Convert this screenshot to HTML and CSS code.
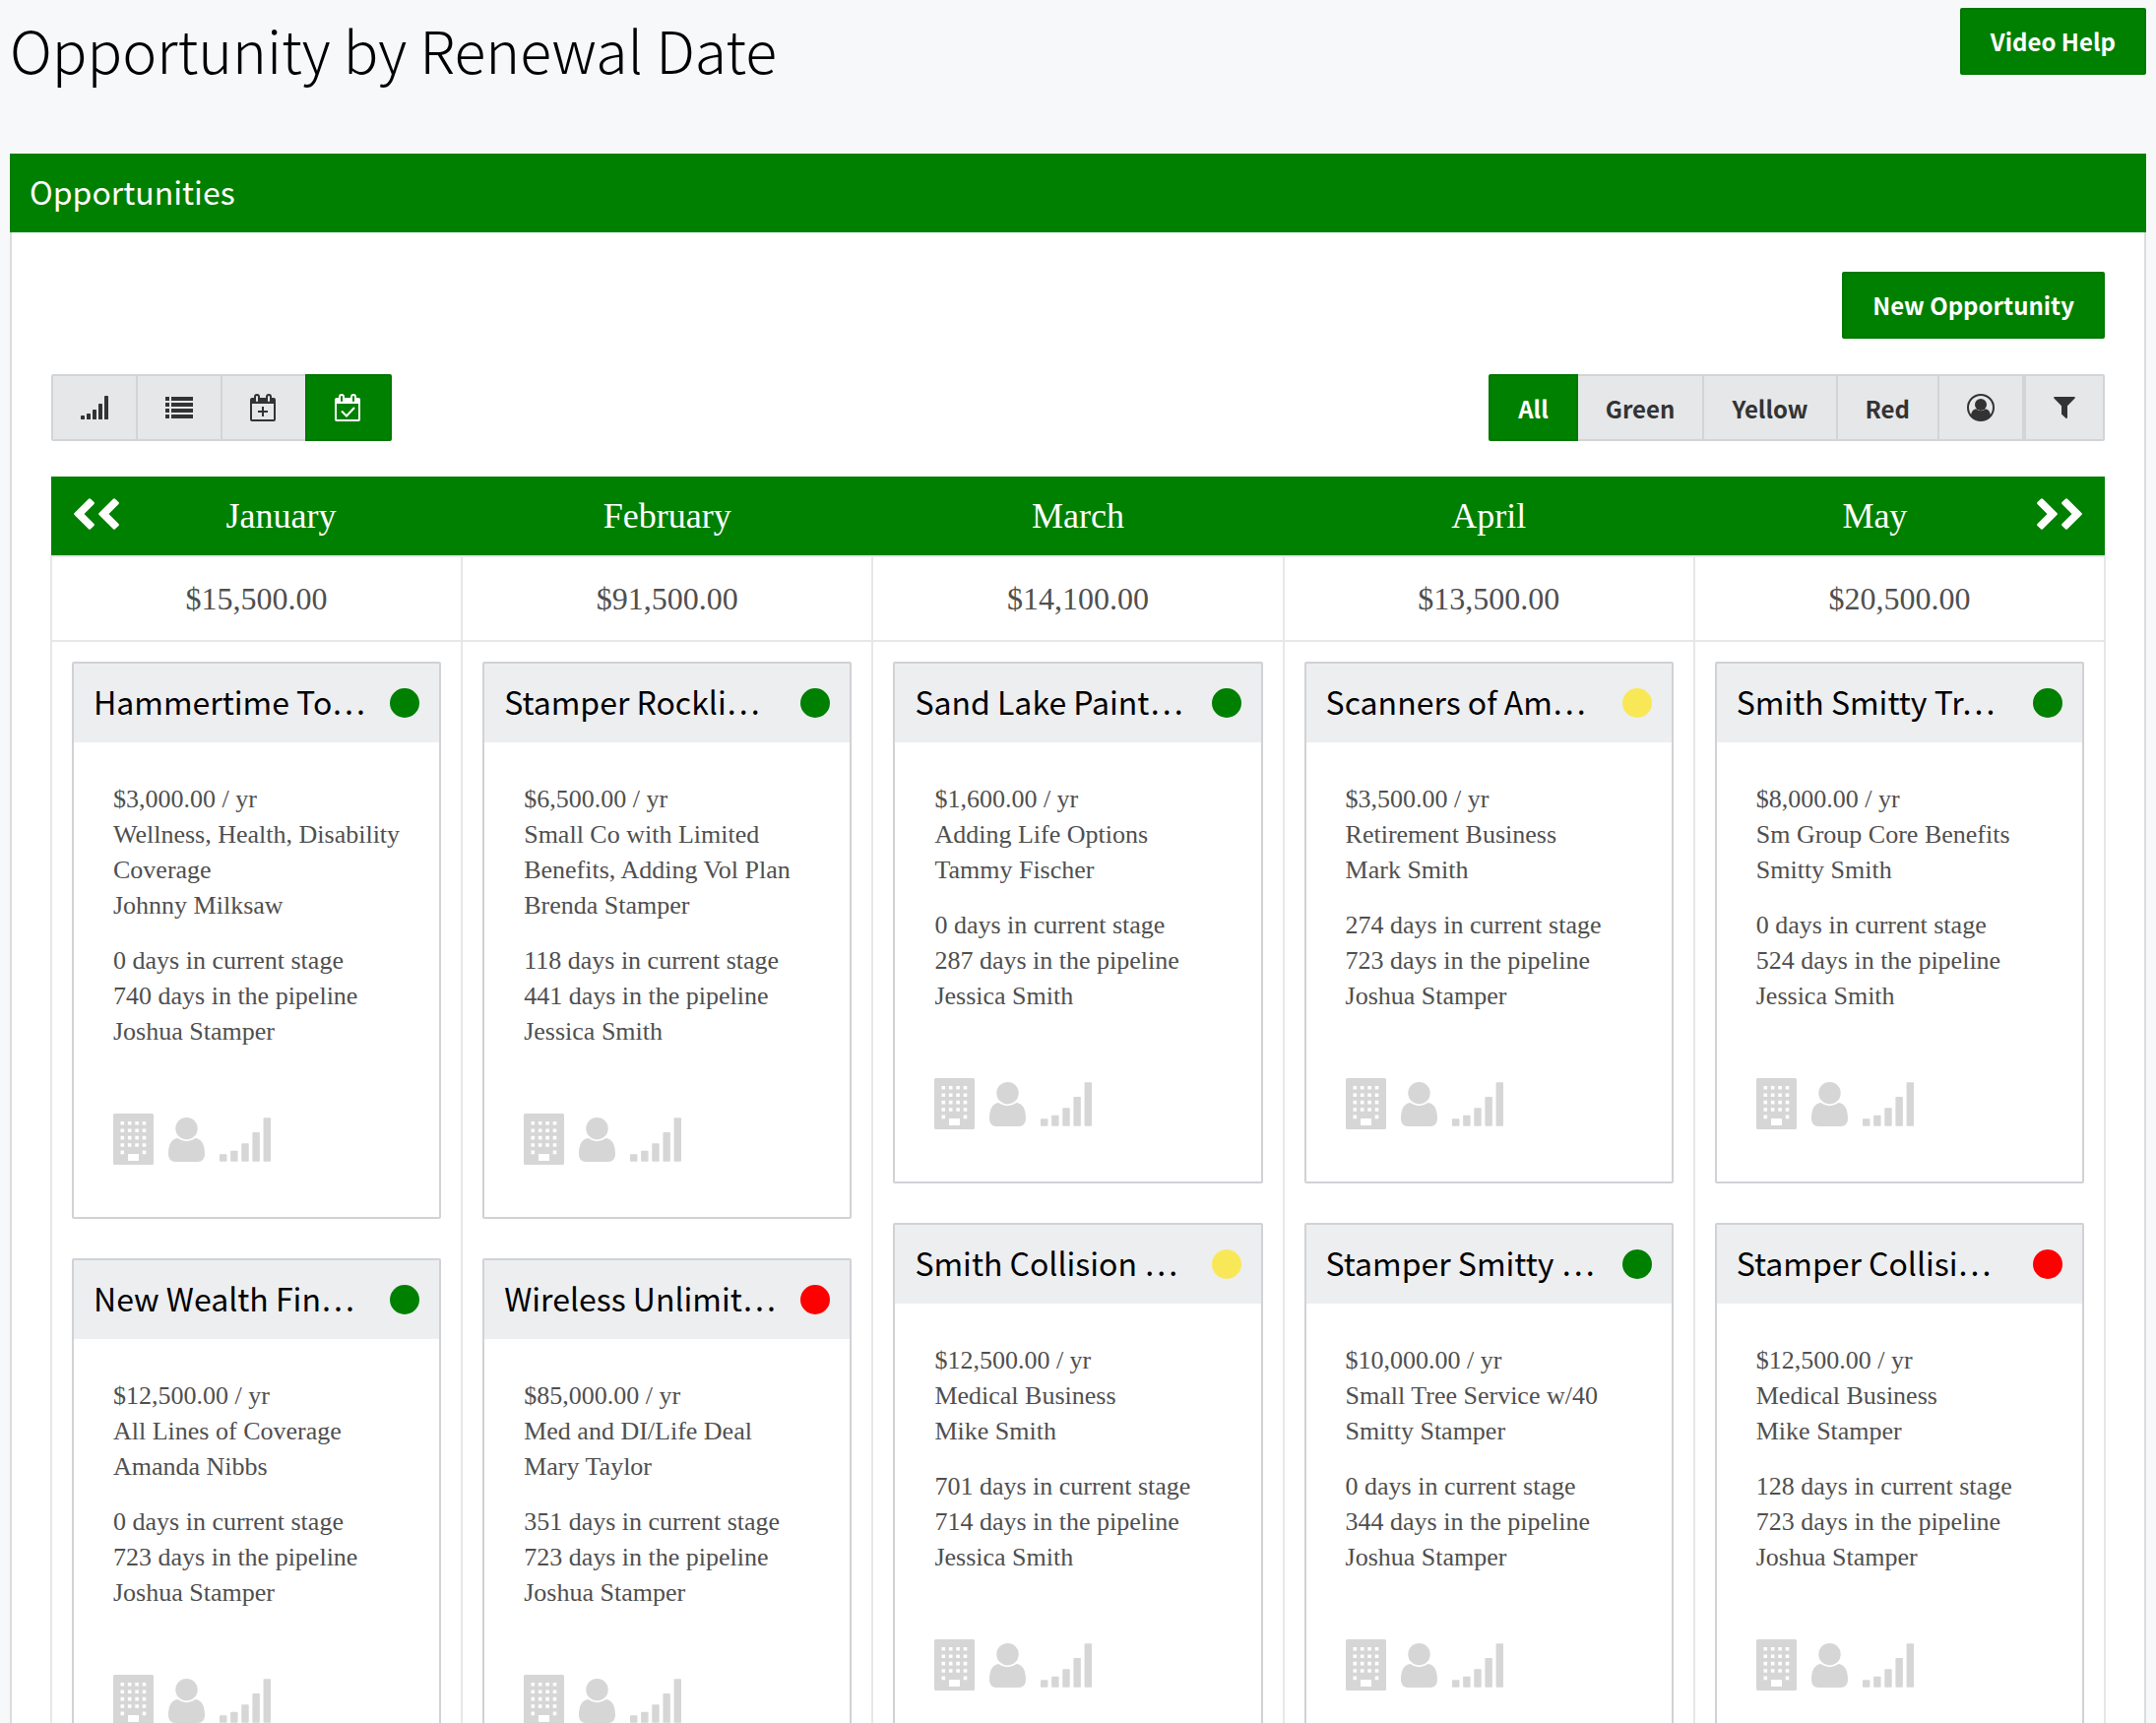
FILE: index.html
```html
<!DOCTYPE html>
<html lang="en">
<head>
<meta charset="utf-8">
<title>Opportunity by Renewal Date</title>
<link rel="stylesheet" href="styles.css">
</head>
<body>
<!-- shared icons -->
<svg class="sprite" aria-hidden="true">
	<symbol id="signal" viewBox="0 0 28 24">
		<rect x="0" y="20" width="4" height="4" rx=".4"/>
		<rect x="6" y="18" width="4" height="6" rx=".4"/>
		<rect x="12" y="14" width="4" height="10" rx=".4"/>
		<rect x="18" y="8" width="4" height="16" rx=".4"/>
		<rect x="24" y="0" width="4" height="24" rx=".4"/>
	</symbol>
	<symbol id="list" viewBox="0 0 28 22">
		<path d="M0 0h4v4H0zM6 0h22v4H6zM0 6h4v4H0zM6 6h22v4H6zM0 12h4v4H0zM6 12h22v4H6zM0 18h4v4H0zM6 18h22v4H6z"/>
	</symbol>
	<symbol id="calendar" viewBox="0 0 28 28">
		<path fill-rule="evenodd" d="M2 4h2V3a3 3 0 0 1 6 0v1h6V3a3 3 0 0 1 6 0v1h2a2 2 0 0 1 2 2v20a2 2 0 0 1-2 2H2a2 2 0 0 1-2-2V6a2 2 0 0 1 2-2zM2 10v16h22V10zM6 3v4a1 1 0 0 0 2 0V3a1 1 0 0 0-2 0zM18 3v4a1 1 0 0 0 2 0V3a1 1 0 0 0-2 0z"/>
	</symbol>
	<symbol id="user-circle" viewBox="0 0 28 28">
		<circle cx="14" cy="14" r="13" fill="none" stroke="currentColor" stroke-width="2"/>
		<circle cx="14" cy="11" r="6"/>
		<path d="M4 22c.5-4 2.300-6.500 5.300-6.500a7 7 0 0 0 9.400 0c3 0 4.800 2.500 5.300 6.500a13 13 0 0 1-20 0z"/>
	</symbol>
	<symbol id="filter" viewBox="0 0 22 22">
		<path d="M.8 0h20.400q1.200.6.400 1.600L14 9.300V21q-.4 1.400-1.600.7L8.400 18q-.4-.4-.4-.8V9.300L.4 1.600Q-.4.6.8 0z"/>
	</symbol>
	<symbol id="back" viewBox="0 0 46 32">
		<path id="chev" d="M.6 15 15 .7q1-1 2 0l3.500 3.200q.8 1 0 2L10.500 16l10 10q.8 1 0 2L17 31.300q-1 1-2 0L.6 17q-1-1 0-2z"/>
		<use href="#chev" x="25"/>
	</symbol>
	<symbol id="building" viewBox="0 0 41 52">
		<path fill-rule="evenodd" d="M1.500 0h38Q41 0 41 1.500v49Q41 52 39.500 52h-38Q0 52 0 50.500v-49Q0 0 1.500 0zM15 41v7h11v-7zM7.500 8v3.600h3.600V8zm7.400 0v3.600h3.600V8zm7.400 0v3.600h3.600V8zm7.400 0v3.600h3.600V8zM7.500 15.400V19h3.600v-3.600zm7.400 0V19h3.600v-3.600zm7.400 0V19h3.600v-3.600zm7.400 0V19h3.600v-3.600zM7.500 22.800v3.600h3.600v-3.600zm7.400 0v3.600h3.600v-3.600zm7.400 0v3.600h3.600v-3.600zm7.400 0v3.600h3.600v-3.600zM7.500 30.200v3.600h3.600v-3.600zm7.400 0v3.600h3.600v-3.600zm7.400 0v3.600h3.600v-3.600zm7.400 0v3.600h3.600v-3.600zM7.500 37.600v3.600h3.600v-3.600zm22.200 0v3.600h3.600v-3.600z"/>
	</symbol>
	<symbol id="user" viewBox="0 0 37 45">
		<circle cx="18.500" cy="11.200" r="11.200"/>
		<path d="M9.500 21a14.500 14.500 0 0 0 18 0C34 21.500 37 28 37 37c0 5-3 8-7 8H7c-4 0-7-3-7-8 0-9 3-15.500 9.500-16z"/>
	</symbol>
</svg>

<header class="page-head">
	<h1>Opportunity by Renewal Date</h1>
	<button type="button" class="btn btn-green">Video Help</button>
</header>

<main class="panel">
	<h2 class="panel-title">Opportunities</h2>
	<div class="panel-body">
		<div class="actions">
			<button type="button" class="btn btn-green">New Opportunity</button>
		</div>
		<div class="toolbar">
			<div class="group">
				<button type="button" class="btn" aria-label="Stages"><svg class="icon" width="28" height="24"><use href="#signal"/></svg></button>
				<button type="button" class="btn" aria-label="List"><svg class="icon" width="28" height="22"><use href="#list"/></svg></button>
				<button type="button" class="btn" aria-label="By created date"><svg class="icon cal" width="28" height="28"><use href="#calendar"/><path d="M8 18h10M13 13v10"/></svg></button>
				<button type="button" class="btn btn-green" aria-label="By renewal date"><svg class="icon cal" width="28" height="28"><use href="#calendar"/><path d="M7 17.500l5 5 8-8.500"/></svg></button>
			</div>
			<div class="group">
				<button type="button" class="btn btn-green">All</button>
				<button type="button" class="btn">Green</button>
				<button type="button" class="btn">Yellow</button>
				<button type="button" class="btn">Red</button>
				<button type="button" class="btn" aria-label="Owner"><svg class="icon" width="28" height="28"><use href="#user-circle"/></svg></button>
				<button type="button" class="btn btn-filter" aria-label="Filter"><svg class="icon" width="22" height="22"><use href="#filter"/></svg></button>
			</div>
		</div>

		<table class="board">
			<thead>
				<tr>
					<th><div class="month"><a href="#" class="arrow" aria-label="Previous months"><svg class="icon" width="46" height="32"><use href="#back"/></svg></a><span>January</span></div></th>
					<th><div class="month"><span>February</span></div></th>
					<th><div class="month"><span>March</span></div></th>
					<th><div class="month"><span>April</span></div></th>
					<th><div class="month"><span>May</span><a href="#" class="arrow next" aria-label="Next months"><svg class="icon" width="46" height="32"><use href="#back"/></svg></a></div></th>
				</tr>
			</thead>
			<tbody>
				<tr class="totals">
					<td>$15,500.00</td>
					<td>$91,500.00</td>
					<td>$14,100.00</td>
					<td>$13,500.00</td>
					<td>$20,500.00</td>
				</tr>
				<tr class="cards">
					<td>
						<article class="card">
							<h3><span>Hammertime To…</span><i class="dot green"></i></h3>
							<div class="card-body">
								<p>$3,000.00 / yr<br>Wellness, Health, Disability Coverage<br>Johnny Milksaw</p>
								<p>0 days in current stage<br>740 days in the pipeline<br>Joshua Stamper</p>
								<div class="links">
									<a href="#" aria-label="Company"><svg class="icon" width="41" height="52"><use href="#building"/></svg></a>
									<a href="#" aria-label="Contact"><svg class="icon" width="37" height="45"><use href="#user"/></svg></a>
									<a href="#" aria-label="Stage"><svg class="icon" width="52" height="45"><use href="#signal"/></svg></a>
								</div>
							</div>
						</article>
						<article class="card">
							<h3><span>New Wealth Fin…</span><i class="dot green"></i></h3>
							<div class="card-body">
								<p>$12,500.00 / yr<br>All Lines of Coverage<br>Amanda Nibbs</p>
								<p>0 days in current stage<br>723 days in the pipeline<br>Joshua Stamper</p>
								<div class="links">
									<a href="#" aria-label="Company"><svg class="icon" width="41" height="52"><use href="#building"/></svg></a>
									<a href="#" aria-label="Contact"><svg class="icon" width="37" height="45"><use href="#user"/></svg></a>
									<a href="#" aria-label="Stage"><svg class="icon" width="52" height="45"><use href="#signal"/></svg></a>
								</div>
							</div>
						</article>
					</td>
					<td>
						<article class="card">
							<h3><span>Stamper Rockli…</span><i class="dot green"></i></h3>
							<div class="card-body">
								<p>$6,500.00 / yr<br>Small Co with Limited Benefits, Adding Vol Plan<br>Brenda Stamper</p>
								<p>118 days in current stage<br>441 days in the pipeline<br>Jessica Smith</p>
								<div class="links">
									<a href="#" aria-label="Company"><svg class="icon" width="41" height="52"><use href="#building"/></svg></a>
									<a href="#" aria-label="Contact"><svg class="icon" width="37" height="45"><use href="#user"/></svg></a>
									<a href="#" aria-label="Stage"><svg class="icon" width="52" height="45"><use href="#signal"/></svg></a>
								</div>
							</div>
						</article>
						<article class="card">
							<h3><span>Wireless Unlimit…</span><i class="dot red"></i></h3>
							<div class="card-body">
								<p>$85,000.00 / yr<br>Med and DI/Life Deal<br>Mary Taylor</p>
								<p>351 days in current stage<br>723 days in the pipeline<br>Joshua Stamper</p>
								<div class="links">
									<a href="#" aria-label="Company"><svg class="icon" width="41" height="52"><use href="#building"/></svg></a>
									<a href="#" aria-label="Contact"><svg class="icon" width="37" height="45"><use href="#user"/></svg></a>
									<a href="#" aria-label="Stage"><svg class="icon" width="52" height="45"><use href="#signal"/></svg></a>
								</div>
							</div>
						</article>
					</td>
					<td>
						<article class="card">
							<h3><span>Sand Lake Paint…</span><i class="dot green"></i></h3>
							<div class="card-body">
								<p>$1,600.00 / yr<br>Adding Life Options<br>Tammy Fischer</p>
								<p>0 days in current stage<br>287 days in the pipeline<br>Jessica Smith</p>
								<div class="links">
									<a href="#" aria-label="Company"><svg class="icon" width="41" height="52"><use href="#building"/></svg></a>
									<a href="#" aria-label="Contact"><svg class="icon" width="37" height="45"><use href="#user"/></svg></a>
									<a href="#" aria-label="Stage"><svg class="icon" width="52" height="45"><use href="#signal"/></svg></a>
								</div>
							</div>
						</article>
						<article class="card">
							<h3><span>Smith Collision …</span><i class="dot yellow"></i></h3>
							<div class="card-body">
								<p>$12,500.00 / yr<br>Medical Business<br>Mike Smith</p>
								<p>701 days in current stage<br>714 days in the pipeline<br>Jessica Smith</p>
								<div class="links">
									<a href="#" aria-label="Company"><svg class="icon" width="41" height="52"><use href="#building"/></svg></a>
									<a href="#" aria-label="Contact"><svg class="icon" width="37" height="45"><use href="#user"/></svg></a>
									<a href="#" aria-label="Stage"><svg class="icon" width="52" height="45"><use href="#signal"/></svg></a>
								</div>
							</div>
						</article>
					</td>
					<td>
						<article class="card">
							<h3><span>Scanners of Am…</span><i class="dot yellow"></i></h3>
							<div class="card-body">
								<p>$3,500.00 / yr<br>Retirement Business<br>Mark Smith</p>
								<p>274 days in current stage<br>723 days in the pipeline<br>Joshua Stamper</p>
								<div class="links">
									<a href="#" aria-label="Company"><svg class="icon" width="41" height="52"><use href="#building"/></svg></a>
									<a href="#" aria-label="Contact"><svg class="icon" width="37" height="45"><use href="#user"/></svg></a>
									<a href="#" aria-label="Stage"><svg class="icon" width="52" height="45"><use href="#signal"/></svg></a>
								</div>
							</div>
						</article>
						<article class="card">
							<h3><span>Stamper Smitty …</span><i class="dot green"></i></h3>
							<div class="card-body">
								<p>$10,000.00 / yr<br>Small Tree Service w/40<br>Smitty Stamper</p>
								<p>0 days in current stage<br>344 days in the pipeline<br>Joshua Stamper</p>
								<div class="links">
									<a href="#" aria-label="Company"><svg class="icon" width="41" height="52"><use href="#building"/></svg></a>
									<a href="#" aria-label="Contact"><svg class="icon" width="37" height="45"><use href="#user"/></svg></a>
									<a href="#" aria-label="Stage"><svg class="icon" width="52" height="45"><use href="#signal"/></svg></a>
								</div>
							</div>
						</article>
					</td>
					<td>
						<article class="card">
							<h3><span>Smith Smitty Tr…</span><i class="dot green"></i></h3>
							<div class="card-body">
								<p>$8,000.00 / yr<br>Sm Group Core Benefits<br>Smitty Smith</p>
								<p>0 days in current stage<br>524 days in the pipeline<br>Jessica Smith</p>
								<div class="links">
									<a href="#" aria-label="Company"><svg class="icon" width="41" height="52"><use href="#building"/></svg></a>
									<a href="#" aria-label="Contact"><svg class="icon" width="37" height="45"><use href="#user"/></svg></a>
									<a href="#" aria-label="Stage"><svg class="icon" width="52" height="45"><use href="#signal"/></svg></a>
								</div>
							</div>
						</article>
						<article class="card">
							<h3><span>Stamper Collisi…</span><i class="dot red"></i></h3>
							<div class="card-body">
								<p>$12,500.00 / yr<br>Medical Business<br>Mike Stamper</p>
								<p>128 days in current stage<br>723 days in the pipeline<br>Joshua Stamper</p>
								<div class="links">
									<a href="#" aria-label="Company"><svg class="icon" width="41" height="52"><use href="#building"/></svg></a>
									<a href="#" aria-label="Contact"><svg class="icon" width="37" height="45"><use href="#user"/></svg></a>
									<a href="#" aria-label="Stage"><svg class="icon" width="52" height="45"><use href="#signal"/></svg></a>
								</div>
							</div>
						</article>
					</td>
				</tr>
			</tbody>
		</table>
	</div>
</main>
</body>
</html>
```

FILE: styles.css
```css
* {
	box-sizing: border-box;
}
body {
	margin: 0;
	padding: 8px 10px 0;
	background-color: #f7f8fa;
	color: #4f4f4f;
	font-family: "Liberation Serif", serif;
	font-size: 26px;
	line-height: 36px;
}
h1, h2, h3, .btn {
	font-family: "Noto Sans CJK KR", "Noto Sans", sans-serif;
	margin: 0;
}
.sprite {
	display: none;
}
.icon {
	display: block;
	fill: currentColor;
}
.page-head {
	display: flex;
	justify-content: space-between;
	align-items: flex-start;
	padding-bottom: 64px;
}
h1 {
	color: black;
	font-size: 59px;
	font-weight: 300;
	line-height: 84px;
}

/* buttons */
.btn {
	display: flex;
	align-items: center;
	justify-content: center;
	height: 68px;
	padding: 0 28px;
	border: 2px solid #d3d4d6;
	background-color: #e6e7e9;
	color: #333;
	font-size: 24px;
	font-weight: bold;
	cursor: pointer;
}
.btn-green {
	background-color: green;
	border-color: #007800;
	color: white;
}
.page-head .btn, .actions .btn {
	padding: 0 29px 2px;
	border-radius: 2px;
}
.group {
	display: flex;
}
.group .btn + .btn {
	margin-left: -2px;
}
.group .btn:first-child {
	border-radius: 2px 0 0 2px;
}
.group .btn:last-child {
	border-radius: 0 2px 2px 0;
}
.group .btn.btn-filter {
	margin-left: 0;
}
.group .btn-green {
	z-index: 1;
}
.cal path {
	fill: none;
	stroke: currentColor;
	stroke-width: 2;
}

/* panel */
.panel {
	border: 2px solid #dcdcdc;
	border-width: 0 2px;
	background-color: white;
}
.panel-title {
	margin: 0 -2px;
	padding: 0 20px 4px;
	background-color: green;
	color: white;
	font-size: 32px;
	font-weight: 400;
	line-height: 76px;
}
.panel-body {
	padding: 40px;
}
.actions {
	display: flex;
	justify-content: flex-end;
	margin-bottom: 36px;
}
.toolbar {
	display: flex;
	justify-content: space-between;
	margin-bottom: 36px;
}

/* month board */
.board {
	width: calc(100% + 2px);
	margin: 0 -1px;
	table-layout: fixed;
	border-collapse: collapse;
}
.board th {
	padding: 0;
	background-color: green;
	color: white;
	font-size: 36px;
	font-weight: normal;
}
.month {
	display: flex;
	align-items: center;
	height: 80px;
	padding: 0 21px;
}
.month span {
	flex: 1;
	text-align: center;
}
.arrow {
	width: 50px;
	padding: 0 2px 4px;
	color: white;
}
.next .icon {
	transform: scaleX(-1);
}
.board td {
	border: 2px solid #e6e7e9;
	vertical-align: top;
}
.totals td {
	height: 86px;
	padding: 0;
	vertical-align: middle;
	text-align: center;
	font-size: 32px;
}
.cards td {
	padding: 20px;
}

/* cards */
.card {
	margin-bottom: 40px;
	border: 2px solid #d1d2d6;
	border-radius: 2px;
	background-color: white;
}
.card h3 {
	display: flex;
	align-items: center;
	justify-content: space-between;
	height: 80px;
	padding: 0 20px;
	background-color: #edeef0;
	color: black;
	font-size: 32px;
	font-weight: 400;
}
.card h3 span {
	padding-bottom: 4px;
	white-space: nowrap;
}
.dot {
	flex: none;
	width: 30px;
	height: 30px;
	border-radius: 50%;
}
.green {
	background-color: green;
}
.yellow {
	background-color: #f8e858;
}
.red {
	background-color: red;
}
.card-body {
	padding: 40px 20px 53px 40px;
}
.card-body p {
	margin: 0 0 20px;
}
.links {
	display: flex;
	align-items: center;
	gap: 15px;
	padding-top: 45px;
}
.links a {
	color: #d6d6d6;
}
```
